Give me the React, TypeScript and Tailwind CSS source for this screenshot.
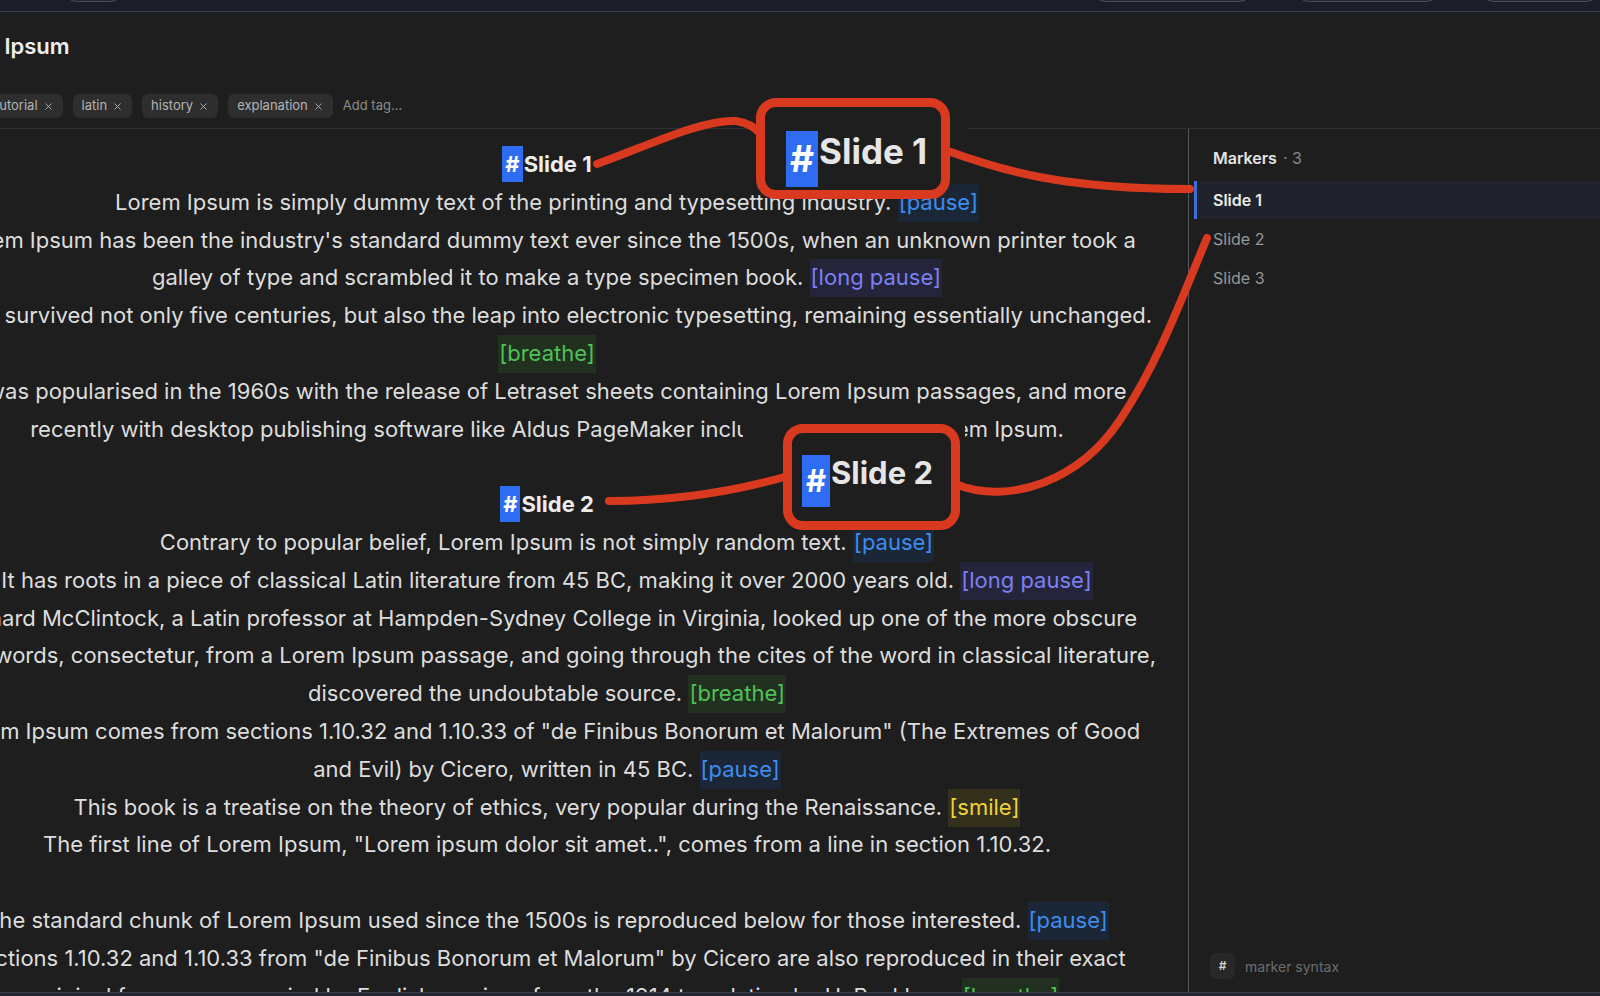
import { X } from 'lucide-react';

type Tag = 'pause' | 'long' | 'breathe' | 'smile';
type Seg = string | { tag: Tag };
type Line = { heading?: string; segs?: Seg[] };

const P: Seg = { tag: 'pause' };
const LP: Seg = { tag: 'long' };
const BR: Seg = { tag: 'breathe' };
const SM: Seg = { tag: 'smile' };

const markerStyle: Record<Tag, { label: string; cls: string }> = {
  pause: { label: '[pause]', cls: 'bg-[#1b2736] text-[#3f8cf0]' },
  long: { label: '[long pause]', cls: 'bg-[#24253a] text-[#7c80f4]' },
  breathe: { label: '[breathe]', cls: 'bg-[#21301f] text-[#4fc257]' },
  smile: { label: '[smile]', cls: 'bg-[#33301b] text-[#f1d23c]' },
};

const lines: Line[] = [
  { heading: 'Slide 1' },
  { segs: ['Lorem Ipsum is simply dummy text of the printing and typesetting industry. ', P] },
  { segs: ["Lorem Ipsum has been the industry's standard dummy text ever since the 1500s, when an unknown printer took a"] },
  { segs: ['galley of type and scrambled it to make a type specimen book. ', LP] },
  { segs: ['It has survived not only five centuries, but also the leap into electronic typesetting, remaining essentially unchanged.'] },
  { segs: [BR] },
  { segs: ['It was popularised in the 1960s with the release of Letraset sheets containing Lorem Ipsum passages, and more'] },
  { segs: ['recently with desktop publishing software like Aldus PageMaker including versions of Lorem Ipsum.'] },
  { segs: [] },
  { heading: 'Slide 2' },
  { segs: ['Contrary to popular belief, Lorem Ipsum is not simply random text. ', P] },
  { segs: ['It has roots in a piece of classical Latin literature from 45 BC, making it over 2000 years old. ', LP] },
  { segs: ['Richard McClintock, a Latin professor at Hampden-Sydney College in Virginia, looked up one of the more obscure'] },
  { segs: ['Latin words, consectetur, from a Lorem Ipsum passage, and going through the cites of the word in classical literature,'] },
  { segs: ['discovered the undoubtable source. ', BR] },
  { segs: ['Lorem Ipsum comes from sections 1.10.32 and 1.10.33 of "de Finibus Bonorum et Malorum" (The Extremes of Good'] },
  { segs: ['and Evil) by Cicero, written in 45 BC. ', P] },
  { segs: ['This book is a treatise on the theory of ethics, very popular during the Renaissance. ', SM] },
  { segs: ['The first line of Lorem Ipsum, "Lorem ipsum dolor sit amet..", comes from a line in section 1.10.32.'] },
  { segs: [] },
  { segs: ['The standard chunk of Lorem Ipsum used since the 1500s is reproduced below for those interested. ', P] },
  { segs: ['Sections 1.10.32 and 1.10.33 from "de Finibus Bonorum et Malorum" by Cicero are also reproduced in their exact'] },
  { segs: ['original form, accompanied by English versions from the 1914 translation by H. Rackham. ', BR] },
];

const tags = ['tutorial', 'latin', 'history', 'explanation'];

function Marker({ tag }: { tag: Tag }) {
  const m = markerStyle[tag];
  return <span className={`pt-[5px] pb-[7px] px-px ${m.cls}`}>{m.label}</span>;
}

function EditorLine({ line }: { line: Line }) {
  if (line.heading) {
    return (
      <div className="h-[37.8px] leading-[37.8px] text-center whitespace-nowrap font-bold text-[#ececec]">
        <span className="bg-[#2f6cf4] text-white px-[3px] pt-[5px] pb-[5px] mr-px">#</span>
        {line.heading}
      </div>
    );
  }
  return (
    <div className="h-[37.8px] leading-[37.8px] text-center whitespace-nowrap text-[#dddddd]">
      {line.segs!.map((s, i) => (typeof s === 'string' ? <span key={i}>{s}</span> : <Marker key={i} tag={s.tag} />))}
    </div>
  );
}

function Callout({ label, cls, hashCls, textCls }: { label: string; cls: string; hashCls: string; textCls: string }) {
  return (
    <div className={`absolute border-[9px] border-[#d93a1f] rounded-[20px] bg-[#1e1e1e] flex items-start ${cls}`}>
      <span className={`bg-[#2f6cf4] text-white font-bold flex items-center justify-center ${hashCls}`}>#</span>
      <span className={`font-bold text-[#e6e6e6] whitespace-nowrap ${textCls}`}>{label}</span>
    </div>
  );
}

export default function App() {
  return (
    <div className="relative h-screen w-full overflow-hidden bg-[#1e1e1e] flex flex-col font-['Inter',sans-serif]">
      {/* top toolbar, cut off */}
      <div className="h-[12px] shrink-0 bg-[#1b1d28] border-b border-[#3a3b4c] flex overflow-hidden">
        <div className="ml-[63px] w-[67px] h-[28px] -mt-[26px] rounded-full border border-[#4b4d62] bg-[#232533]" />
        <div className="ml-[968px] w-[178px] h-[28px] -mt-[26px] rounded-full border border-[#4b4d62] bg-[#232533]" />
        <div className="ml-[42px] w-[161px] h-[28px] -mt-[26px] rounded-full border border-[#4b4d62] bg-[#232533]" />
        <div className="ml-[40px] w-[120px] h-[28px] -mt-[26px] rounded-full border border-[#4b4d62] bg-[#232533] shrink-0" />
      </div>

      {/* title + tags */}
      <div className="h-[117px] shrink-0 border-b border-[#323232] flex flex-col">
        <div className="ml-[-68px] mt-[20px] h-[28px] leading-[28px] text-[22px] font-semibold text-[#eeeeee] whitespace-nowrap">
          Lorem Ipsum
        </div>
        <div className="ml-[-14px] mt-[34px] flex items-center gap-[10px] text-[13px]">
          {tags.map(t => (
            <span key={t} className="h-[24px] px-[9px] rounded-md bg-[#2e2e2e] text-[#b4b4b4] flex items-center gap-[5px] whitespace-nowrap">
              {t}
              <X className="w-[11px] h-[11px]" strokeWidth={2} />
            </span>
          ))}
          <span className="text-[#8c8c8c] whitespace-nowrap">Add tag...</span>
        </div>
      </div>

      <div className="flex flex-1 min-h-0">
        {/* editor */}
        <div className="flex-1 ml-[-94px] pt-[17px] text-[22px] overflow-hidden">
          {lines.map((l, i) => (
            <EditorLine key={i} line={l} />
          ))}
        </div>

        {/* markers sidebar */}
        <div className="w-[412px] shrink-0 border-l border-[#55555f] pl-[5px] flex flex-col">
          <div className="pl-[19px] pt-[18px] h-[40px] leading-[22px] text-[16px] whitespace-nowrap">
            <span className="font-semibold text-[#e4e4e4]">Markers</span>
            <span className="text-[#8b8b8b] ml-[6px]">· 3</span>
          </div>
          <div className="mt-[12px] flex flex-col text-[16px]">
            <div className="h-[38px] flex items-center border-l-[3px] border-[#3d6fd8] bg-[#20232c] pl-[16px] font-semibold text-[#ececec]">
              Slide 1
            </div>
            <div className="h-[39px] flex items-center border-l-[3px] border-transparent pl-[16px] text-[#979797]">Slide 2</div>
            <div className="h-[39px] flex items-center border-l-[3px] border-transparent pl-[16px] text-[#979797]">Slide 3</div>
          </div>
          <div className="mt-auto mb-[13px] pl-[16px] flex items-center gap-[10px]">
            <span className="w-[25px] h-[26px] rounded-md bg-[#282828] text-[#cfcfcf] text-[12px] font-semibold flex items-center justify-center">
              #
            </span>
            <span className="text-[14px] text-[#6d6d6d]">marker syntax</span>
          </div>
        </div>
      </div>

      <div className="h-[4px] shrink-0 bg-[#262731] border-t border-[#3a3b45]" />

      {/* annotation overlay */}
      <div className="absolute left-[743px] top-[407px] w-[222px] h-[34px] bg-[#1e1e1e]" />
      <div className="absolute left-[940px] top-[122px] w-[28px] h-[12px] bg-[#1e1e1e]" />
      <svg className="absolute inset-0 pointer-events-none" width="1600" height="996" viewBox="0 0 1600 996" fill="none">
        <g stroke="#d93a1f" strokeWidth="8" strokeLinecap="round" fill="none">
          <path d="M597 164 C645 147 702 119 736 121 Q753 123 764 138" />
          <path d="M945 150 C1000 170 1060 189 1190 189" />
          <path d="M955 484 C1010 506 1080 480 1120 420 C1160 360 1185 290 1207 238" />
          <path d="M609 501 C662 501 722 495 788 476" />
        </g>
      </svg>
      <Callout
        label="Slide 1"
        cls="left-[756px] top-[98px] w-[194px] h-[101px] pl-[21px]"
        hashCls="w-[32px] h-[56px] text-[37px] mt-[24px]"
        textCls="text-[35px] leading-[44px] mt-[22px] ml-px"
      />
      <Callout
        label="Slide 2"
        cls="left-[783px] top-[424px] w-[177px] h-[106px] pl-[10px]"
        hashCls="w-[28px] h-[52px] text-[31px] mt-[22px]"
        textCls="text-[31px] leading-[40px] mt-[20px] ml-px"
      />
    </div>
  );
}
